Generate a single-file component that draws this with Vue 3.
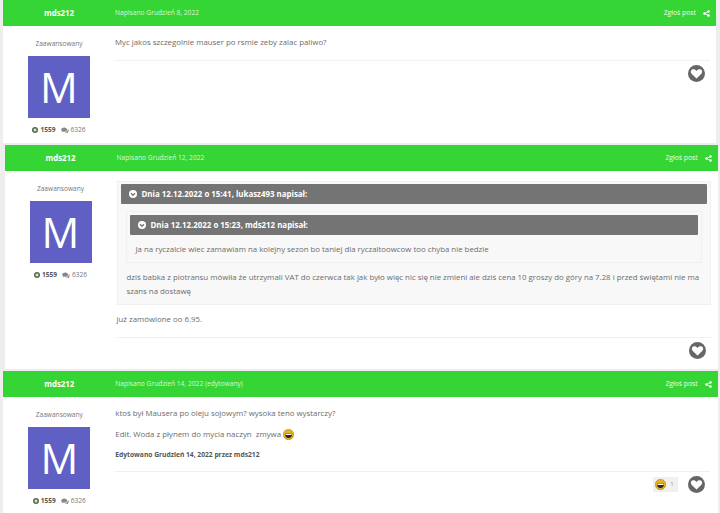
<script setup>
const posts = [
  { id: 'a', date: 'Napisano Grudzień 8, 2022' },
  { id: 'b', date: 'Napisano Grudzień 12, 2022' },
  { id: 'c', date: 'Napisano Grudzień 14, 2022 (edytowany)' }
]
</script>

<template>
  <div class="page">
    <article v-for="p in posts" :key="p.id" class="post" :class="'post-' + p.id">
      <header class="head">
        <strong class="name">mds212</strong>
        <span class="date">{{ p.date }}</span>
        <span class="report">Zgłoś post</span>
        <svg class="share" viewBox="0 0 16 16"><circle cx="12.5" cy="3.5" r="3"/><circle cx="12.5" cy="12.5" r="3"/><circle cx="3.5" cy="8" r="3"/><path d="M12.5 3.5 3.5 8l9 4.5" fill="none" stroke="#fff" stroke-width="1.8"/></svg>
      </header>
      <div class="body">
        <aside class="side">
          <div class="rank">Zaawansowany</div>
          <div class="avatar">M</div>
          <div class="stats">
            <svg class="plus" viewBox="0 0 16 16"><circle cx="8" cy="8" r="8"/><path d="M8 4v8M4 8h8" stroke="#fff" stroke-width="3"/></svg>
            <b>1559</b>
            <svg class="comments" viewBox="0 0 20 16"><path d="M8 1C3.8 1 .5 3.4.5 6.4c0 1.6 1 3 2.4 4-.2.9-.8 1.700-1.500 2.400 1.500-.1 2.900-.7 3.900-1.500.9.300 1.800.4 2.700.4 4.200 0 7.500-2.400 7.500-5.300S12.200 1 8 1z"/><path d="M17.300 12.300c1.300-.9 2.200-2.200 2.200-3.700 0-1.500-.9-2.800-2.200-3.700.2 2.900-2 6.700-8 7.400 1.200 1 2.800 1.500 4.400 1.400.8.800 2.600 1.600 4.700 1.700-.6-.6-1-1.300-1.100-2.600z"/></svg>
            <span>6326</span>
          </div>
        </aside>
        <div class="main">
          <div class="content">
            <template v-if="p.id === 'a'">
              <p>Myc jakos szczegolnie mauser po rsmie zeby zalac paliwo?</p>
            </template>
            <template v-else-if="p.id === 'b'">
              <div class="quote outer">
                <div class="qhead">
                  <svg class="chev" viewBox="0 0 16 16"><circle cx="8" cy="8" r="8" fill="#fff"/><path d="M4 6.500l4 4 4-4" fill="none" stroke="#747474" stroke-width="2.600"/></svg>
                  Dnia 12.12.2022 o 15:41, lukasz493 napisał:
                </div>
                <div class="quote inner">
                  <div class="qhead">
                    <svg class="chev" viewBox="0 0 16 16"><circle cx="8" cy="8" r="8" fill="#fff"/><path d="M4 6.500l4 4 4-4" fill="none" stroke="#747474" stroke-width="2.600"/></svg>
                    Dnia 12.12.2022 o 15:23, mds212 napisał:
                  </div>
                  <p class="qtext">Ja na ryczalcie wiec zamawiam na kolejny sezon bo taniej dla ryczaltoowcow too chyba nie bedzie</p>
                </div>
                <p class="qtext2">dziś babka z piotransu mówiła że utrzymali VAT do czerwca tak jak było więc nic się nie zmieni ale dziś cena 10 groszy do góry na 7.28 i przed świętami nie ma szans na dostawę</p>
              </div>
              <p>już zamówione oo 6.95.</p>
            </template>
            <template v-else>
              <p>ktoś był Mausera po oleju sojowym? wysoka teno wystarczy?</p>
              <p class="gap">Edit. Woda z płynem do mycia naczyn&nbsp; zmywa
                <svg class="emoji" viewBox="0 0 20 20"><circle cx="10" cy="10" r="9.500" fill="#e8b020" stroke="#8a6a10" stroke-width=".8"/><path d="M3.500 8.500h13c0 5-2.800 8-6.500 8s-6.500-3-6.500-8z" fill="#222"/><path d="M4.500 9h11v2h-11z" fill="#fff"/></svg>
              </p>
              <p class="edited">Edytowano Grudzień 14, 2022 przez mds212</p>
            </template>
          </div>
          <footer class="foot">
            <span v-if="p.id === 'c'" class="reaction">
              <svg class="emoji big" viewBox="0 0 20 20"><circle cx="10" cy="10" r="9.500" fill="#e8b020" stroke="#8a6a10" stroke-width=".8"/><path d="M3.500 8.500h13c0 5-2.800 8-6.500 8s-6.500-3-6.500-8z" fill="#222"/><path d="M4.500 9h11v2h-11z" fill="#fff"/></svg>
              <i>1</i>
            </span>
            <svg class="like" viewBox="0 0 20 20"><circle cx="10" cy="10" r="10" fill="#666"/><path d="M10 16 4.200 10.200C2.600 8.500 3.200 5.500 5.900 5.100 7.600 4.900 9 5.700 10 7.100c1-1.400 2.400-2.200 4.100-2 2.700.4 3.300 3.400 1.700 5.100z" fill="#fff"/></svg>
          </footer>
        </div>
      </div>
    </article>
  </div>
</template>

<style>
html, body { margin: 0; background: #eeeeee; overflow: hidden; }
</style>

<style scoped>
.page {
  height: 513px;
  overflow: hidden;
  font-family: "Open Sans", "Liberation Sans", sans-serif;
  color: #6c6c6c;
  font-size: 7.850px;
  line-height: 14px;
}
.post { background: #fff; margin-bottom: 2px; }
.post-a { margin-left: 3px; margin-right: 4px; }
.post-b { margin-left: 4.500px; margin-right: 2.300px; }
.post-c { margin-left: 3.300px; margin-right: 2.300px; }
.head {
  display: flex;
  align-items: center;
  height: 26px;
  background: #36d536;
  color: #fff;
  padding-right: 6px;
}
.name { width: 112px; text-align: center; font-size: 7.900px; }
.date { flex: 1; font-size: 6.700px; color: #d8f7d8; }
.report { font-size: 6.800px; color: #eafbea; margin-right: 7px; }
.share { width: 7px; height: 7px; fill: #fff; }
.body { display: flex; }
.side { width: 112px; flex: none; display: flex; flex-direction: column; align-items: center; padding-top: 11px; padding-bottom: 6px; }
.rank { font-size: 6.600px; color: #777; line-height: 14px; }
.avatar {
  width: 62px; height: 62px; margin-top: 5px;
  background: #5f5fc4; color: #fff;
  display: flex; align-items: center; justify-content: center;
  font-size: 42px; line-height: 1;
}
.stats { display: flex; align-items: center; margin-top: 5px; height: 14px; font-size: 6.600px; color: #777; }
.stats b { color: #555; margin-right: 5px; }
.plus { width: 6px; height: 6px; fill: #566a4e; margin-right: 2px; }
.comments { width: 8px; height: 6.500px; fill: #888; margin-right: 2px; }
.main { flex: 1; min-width: 0; padding-top: 9px; padding-right: 6px; padding-bottom: 10.500px; }
.post-b .main { padding-right: 7px; padding-top: 10px; }
.post-c .main { padding-right: 8px; }
.content { border-bottom: 1px solid #f0f0f0; padding-bottom: 11px; }
.post-c .content { padding-bottom: 10px; }
p { margin: 0; }
.gap { margin-top: 7px; display: flex; align-items: center; gap: 2px; }
.edited { margin-top: 7px; font-size: 6.700px; line-height: 13px; font-weight: 700; color: #555; }
.quote { background: #f8f8f8; border: 1px solid #f0f0f0; }
.outer { padding: 2px 3px 6px; margin-bottom: 7px; }
.inner { margin: 7.500px 5px 0; padding: 3px 3px 6px; }
.qhead {
  display: flex; align-items: center; gap: 5px;
  height: 20px; padding-left: 8px;
  background: #747474; color: #fff;
  font-weight: 700; font-size: 7.900px;
  border-radius: 1px;
}
.outer > .qhead { height: 19.500px; }
.chev { width: 8px; height: 8px; }
.qtext { padding: 7px 0 0 6px; }
.qtext2 { padding: 7px 2px 0 6px; }
.foot { display: flex; justify-content: flex-end; align-items: center; gap: 10px; padding: 3.500px 5px 0 0; }
.post-b .foot, .post-c .foot { padding-right: 4.500px; }
.like { width: 17px; height: 17px; }
.emoji { width: 11px; height: 11px; }
.reaction {
  display: flex; align-items: center; gap: 4px;
  width: 25px; height: 15px; padding-left: 2px; box-sizing: border-box;
  background: #f0f0f0; font-size: 6px; color: #999;
}
.reaction i { font-style: normal; }
</style>
